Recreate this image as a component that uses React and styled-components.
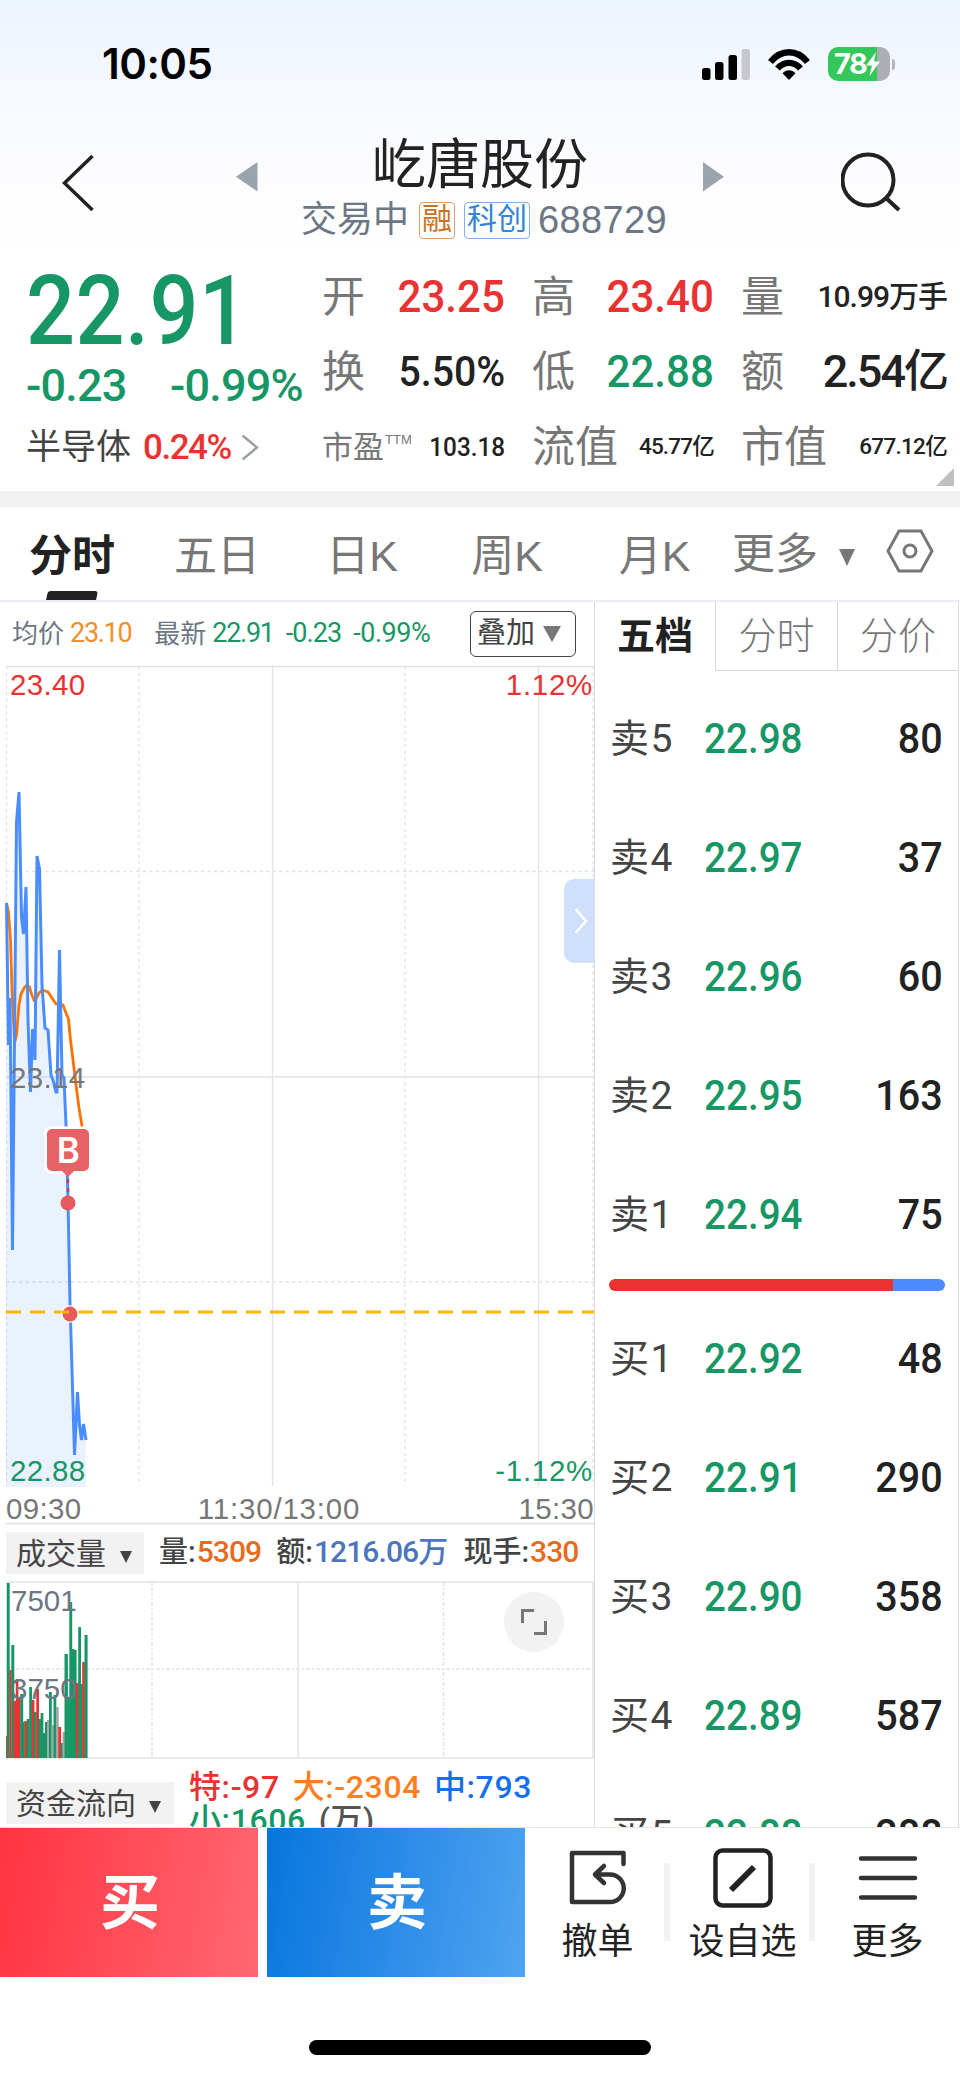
import styled, { createGlobalStyle, css } from 'styled-components'

const GREEN = '#189766'
const RED = '#e93232'

const GlobalStyle = createGlobalStyle`
* { box-sizing: border-box; }
body {
  margin: 0;
  background: #fff;
  color: #222;
  font-family: "Liberation Sans", "Noto Sans CJK SC", sans-serif;
}
svg { display: block; flex: none; }
`

const din = css`
font-family: Roboto, "Noto Sans CJK SC", sans-serif;
`

const Screen = styled.div`
width: 960px;
height: 2079px;
overflow: hidden;
display: flex;
flex-direction: column;
`

/* header */
const Header = styled.header`
height: 260px;
flex: none;
background: linear-gradient(#ecf4ff, #f3f7ff 25%, #fdfdff 70%, #fff);
`
const StatusBar = styled.div`
height: 128px;
padding: 0 65px 0 102px;
display: flex;
align-items: center;
justify-content: space-between;
`
const Clock = styled.span`
font: 600 42px/50px Inter, sans-serif;
letter-spacing: -0.5px;
color: #000;
`
const StatusIcons = styled.div`
display: flex;
align-items: center;
gap: 18px;
`
const Battery = styled.div`
display: flex;
align-items: center;
gap: 2px;
`
const BatteryBody = styled.div`
width: 62px;
height: 34px;
border-radius: 10px;
background: linear-gradient(90deg, #34c759 79%, #adaeb5 79%);
display: flex;
align-items: center;
padding-left: 6px;
font: 700 29px/34px Inter, sans-serif;
letter-spacing: -1.5px;
color: #fff;
`
const BatteryTip = styled.div`
width: 3px;
height: 11px;
border-radius: 0 3px 3px 0;
background: #b4b5bb;
`
const NavBar = styled.div`
display: grid;
grid-template-columns: 62px 174px 488px 117px 1fr;
height: 120px;
`
const NavSlot = styled.div`
grid-column: ${p => p.$col};
padding-top: ${p => p.$top}px;
`
const TitleBlock = styled.div`
display: grid;
grid-template-columns: 22px 1fr 22px;
grid-column: 3;
`
const Title = styled.h1`
margin: 3px 0 0;
font-size: 54px;
font-weight: 400;
line-height: 68px;
text-align: center;
white-space: nowrap;
`
const SubTitle = styled.div`
margin-top: 2px;
margin-left: 8px;
display: flex;
align-items: center;
justify-content: center;
font-size: 36px;
line-height: 38px;
white-space: nowrap;
color: #6b7784;
`
const Tag = styled.span`
height: 37px;
padding: 0 2px;
margin-left: ${p => p.$gap}px;
border: 1.5px solid ${p => p.$border};
border-radius: 4px;
font-size: 30px;
line-height: 32px;
color: ${p => p.$color};
`
const Code = styled.span`
margin-left: 8px;
font-size: 38px;
letter-spacing: 0.4px;
`

/* quote */
const Quote = styled.section`
display: flex;
height: 231px;
flex: none;
`
const QuoteMain = styled.div`
width: 322px;
padding-left: 26px;
color: ${GREEN};
${din}
`
const BigPrice = styled.div`
padding-top: 3px;
height: 96px;
font-size: 97px;
line-height: 97px;
font-weight: 500;
letter-spacing: 0.5px;
transform: scaleX(0.89);
transform-origin: left;
`
const Changes = styled.div`
display: flex;
height: 59px;
font-size: 45px;
line-height: 59px;
font-weight: 500;
letter-spacing: -0.8px;
`
const ChangeValue = styled.span`
width: ${p => p.$w || 'auto'};
white-space: nowrap;
`
const Sector = styled.div`
display: flex;
align-items: center;
height: 65px;
font-size: 35px;
line-height: 1;
color: #444;
white-space: nowrap;
`
const SectorRate = styled.span`
margin: 0 10px 0 12px;
color: ${RED};
font-weight: 500;
letter-spacing: -1.5px;
`
const Stats = styled.div`
flex: 1;
display: grid;
grid-template-columns: 183px 182px 206px;
grid-auto-rows: 75px;
column-gap: 27px;
position: relative;
`
const Stat = styled.div`
display: flex;
align-items: center;
justify-content: space-between;
line-height: 1;
white-space: nowrap;
`
const StatLabel = styled.span`
font-size: ${p => (p.$small ? 31 : 43)}px;
color: #777;
sup {
  font-size: 13px;
  line-height: 1;
  vertical-align: 14px;
  margin-left: 1px;
}
`
const StatValue = styled.span`
${din}
font-size: ${p => p.$size}px;
font-weight: 500;
letter-spacing: ${p => p.$ls || 0}px;
padding-bottom: 2px;
color: ${p => p.$color || '#222'};
transform: scaleX(${p => (p.$ls ? 1 : 0.935)});
transform-origin: right;
`
const Corner = styled.div`
position: absolute;
right: 6px;
top: 208px;
border-left: 18px solid transparent;
border-bottom: 18px solid #bfbfbf;
`
const Divider = styled.div`
height: 16px;
flex: none;
background: #f2f2f2;
`

/* period tabs */
const Periods = styled.nav`
display: grid;
grid-template-columns: 145px 145px 145px 145px 150px 1fr;
height: 95px;
flex: none;
border-bottom: 2px solid #ebecf5;
`
const Period = styled.div`
display: flex;
flex-direction: column;
align-items: center;
font-size: 43px;
line-height: 98px;
height: 93px;
margin-left: -1px;
color: ${p => (p.$active ? '#222' : '#777')};
font-weight: ${p => (p.$active ? 600 : 400)};
`
const ActiveMark = styled.i`
width: 50px;
height: 9px;
margin-top: -14px;
border-radius: 3px 3px 0 0;
background: #222;
transform: skewX(-12deg);
`
const MorePeriods = styled.div`
display: flex;
align-items: center;
padding-left: 2px;
font-size: 43px;
line-height: 98px;
height: 93px;
color: #777;
`
const Caret = styled.i`
margin: ${p => p.$m};
border: ${p => p.$w}px solid transparent;
border-bottom: 0;
border-top: ${p => p.$h}px solid ${p => p.$color};
`
const HexSlot = styled.div`
margin: -5px 0 0 31px;
`

/* body */
const Body = styled.main`
display: flex;
height: 1226px;
flex: none;
overflow: hidden;
border-bottom: 1px solid #e6e6e6;
`
const Left = styled.div`
width: 595px;
flex: none;
border-right: 1px solid #dcdcdf;
`
const InfoRow = styled.div`
display: flex;
align-items: center;
height: 63px;
padding: 0 18px 0 12px;
font-size: 26px;
color: #6b7784;
white-space: nowrap;
`
const InfoNum = styled.span`
${din}
font-size: 27px;
line-height: 1;
letter-spacing: ${p => p.$ls || -1.3}px;
color: ${p => p.$color};
margin-left: ${p => p.$gap}px;
`
const InfoLabel = styled.span`
line-height: 1;
margin-left: ${p => p.$gap || 0}px;
`
const OverlayButton = styled.button`
display: flex;
align-items: center;
width: 106px;
height: 46px;
margin-left: auto;
padding: 0 0 0 6px;
border: 1.5px solid #444;
border-radius: 6px;
background: #fff;
font: 29px/1 "Liberation Sans", "Noto Sans CJK SC", sans-serif;
color: #444;
`
const ChartWrap = styled.div`
position: relative;
height: 860px;
`
const SideHandle = styled.div`
position: absolute;
right: 0;
top: 214px;
width: 30px;
height: 84px;
padding-left: 3px;
border-radius: 10px 0 0 10px;
background: #cfe0fd;
display: flex;
align-items: center;
justify-content: center;
`
const VolumeHead = styled.div`
display: flex;
align-items: center;
height: 56px;
padding-left: 6px;
font-size: 29px;
line-height: 1;
font-weight: 500;
color: #444;
white-space: nowrap;
${din}
`
const Picker = styled.div`
width: ${p => p.$w}px;
height: 42px;
flex: none;
display: flex;
align-items: center;
padding: 2px 0 0 10px;
background: #f2f2f2;
font-size: 30px;
line-height: 1;
font-weight: 400;
color: #444;
`
const HeadItem = styled.span`
margin-left: ${p => p.$gap}px;
padding-bottom: 2px;
b {
  margin-left: 1px;
  font-size: 30px;
  font-weight: 500;
  letter-spacing: -0.9px;
  color: ${p => p.$color};
}
`
const VolumeWrap = styled.div`
position: relative;
height: 178px;
`
const Expand = styled.div`
position: absolute;
right: 30px;
top: 11px;
width: 60px;
height: 60px;
border-radius: 50%;
background: #f2f2f2;
display: flex;
align-items: center;
justify-content: center;
`
const FundHead = styled.div`
display: flex;
height: 70px;
padding: 12px 0 0 6px;
`
const FundPicker = styled(Picker)`
margin-top: 11px;
`
const FundList = styled.div`
${din}
display: flex;
flex-wrap: wrap;
align-content: flex-start;
column-gap: 13px;
padding-left: 15px;
font-size: 32px;
line-height: 33px;
font-weight: 500;
letter-spacing: 0.6px;
white-space: nowrap;
`
const Fund = styled.span`
color: ${p => p.$color};
`

/* order book */
const Book = styled.aside`
width: 364px;
flex: none;
border-right: 1px solid #dcdcdf;
`
const BookTabs = styled.div`
display: grid;
grid-template-columns: 120px 122px 121px;
height: 67px;
`
const BookTab = styled.div`
font-size: 38px;
line-height: 68px;
text-align: center;
color: ${p => (p.$active ? '#222' : '#777')};
font-weight: ${p => (p.$active ? 700 : 300)};
border-left: ${p => (p.$active ? 0 : '1.5px solid #d8d8da')};
border-bottom: ${p => (p.$active ? 0 : '1.5px solid #d8d8da')};
`
const Orders = styled.div`
display: grid;
grid-auto-rows: 60px;
row-gap: 59px;
padding: ${p => p.$top}px 15px 0 15px;
`
const Order = styled.div`
display: grid;
grid-template-columns: 94px 1fr auto;
align-items: center;
font-size: 42px;
line-height: 1;
font-weight: 500;
${din}
`
const Side = styled.span`
font-size: 39px;
font-weight: 400;
letter-spacing: 1.4px;
color: #444;
`
const Price = styled.span`
color: ${GREEN};
transform: scaleX(0.92);
transform-origin: left;
`
const Amount = styled.span`
color: #222;
transform: scaleX(0.94);
transform-origin: right;
`
const Ratio = styled.div`
margin: 34px 13px 0 14px;
height: 12px;
border-radius: 6px;
background: linear-gradient(90deg, ${RED} 84.5%, #4d8cff 84.5%);
`

/* bottom */
const ActionBar = styled.footer`
display: flex;
height: 149px;
flex: none;
`
const TradeButton = styled.button`
width: 258px;
margin-right: ${p => p.$gap || 0}px;
padding: 0 0 9px 2px;
border: 0;
color: #fff;
font: 700 60px/1 "Noto Sans CJK SC", sans-serif;
background: linear-gradient(100deg, ${p => p.$from}, ${p => p.$to});
`
const Action = styled.div`
width: 145px;
display: flex;
flex-direction: column;
align-items: center;
font-size: 36px;
line-height: 50px;
`
const ActionIcon = styled.div`
height: 89px;
padding-top: 10px;
display: flex;
align-items: center;
`
const Separator = styled.i`
width: 6px;
height: 78px;
margin: 35px 0 0 -6px;
background: #f2f2f2;
`
const HomeIndicator = styled.div`
width: 342px;
height: 15px;
margin: 63px auto 0;
border-radius: 8px;
background: #000;
`

// values that carry a unit are tightened by letter spacing, plain ones are condensed
const stats = [
  { label: '开', value: '23.25', size: 45, color: RED },
  { label: '高', value: '23.40', size: 45, color: RED },
  { label: '量', value: '10.99万手', size: 30, ls: -1 },
  { label: '换', value: '5.50%', size: 42 },
  { label: '低', value: '22.88', size: 45, color: GREEN },
  { label: '额', value: '2.54亿', size: 45, ls: -2 },
  { label: '市盈', sup: 'TTM', value: '103.18', size: 26 },
  { label: '流值', value: '45.77亿', size: 22.5, ls: -0.8 },
  { label: '市值', value: '677.12亿', size: 22.5, ls: -0.7 },
]

const sells = [
  ['卖5', '22.98', 80],
  ['卖4', '22.97', 37],
  ['卖3', '22.96', 60],
  ['卖2', '22.95', 163],
  ['卖1', '22.94', 75],
]
const buys = [
  ['买1', '22.92', 48],
  ['买2', '22.91', 290],
  ['买3', '22.90', 358],
  ['买4', '22.89', 587],
  ['买5', '22.88', 288],
]

const pricePoints = '6.5,238 8.5,380 10,333 12.5,585 16.5,157 19,127 21.5,252 23.5,269 26,222 28,355 30.5,427 32.5,364 35,395 37,191 39.5,204 42,320 45,363 48,365 51,410 53,415 56,427 57,427 59.5,285 62,410 64,413 66,460 68,535 70,638 72,705 74.5,790 77.5,727 79.5,760 81.5,775 83.5,759 86,775'
const avgPoints = '6.5,238 8.5,247 10.5,275 12,325 14.5,378 16.5,370 19,340 21,329 24,323 27,320 29.5,322 31.5,329 34,335 36,334 39,328 42,325 48,327 52,333 56,339 63,340 66,348 68.5,354 70.5,375 73,395 76,420 79,443 82,461 86,482'

// [x, width, top, colour]
const bars = [
  [6, 1, 155, 'r'], [6.7, 2.6, 2, 'g'], [9.3, 2, 89, 'r'], [11.3, 2.6, 64, 'g'],
  [13.5, 2.4, 120, 'r'], [15.8, 2.2, 98, 'r'], [18, 2.2, 116, 'r'], [20.2, 2.6, 113, 'g'],
  [22.8, 1.6, 141, 'g'], [24.4, 2.4, 140, 'r'], [26.8, 2.4, 138, 'g'], [29.2, 2.4, 106, 'g'],
  [31.6, 2.4, 119, 'r'], [34, 2.3, 131, 'g'], [36.3, 2.3, 108, 'r'], [38.6, 2, 138, 'g'],
  [40.6, 2.4, 132, 'g'], [43, 2, 152, 'g'], [45, 2, 141, 'g'], [47, 2, 139, 'x'],
  [49, 2.4, 111, 'g'], [51.4, 2.1, 144, 'x'], [53.5, 2.4, 114, 'g'], [55.9, 2.4, 126, 'x'],
  [58.3, 2.4, 146, 'r'], [60.7, 1.8, 162, 'g'], [62.5, 2, 151, 'x'], [64.5, 3, 73, 'g'],
  [67.5, 2, 116, 'g'], [69.3, 2.5, 21, 'g'], [71.6, 2.4, 68, 'g'], [74, 2.2, 69, 'g'],
  [76, 2.4, 102, 'r'], [78.2, 2.4, 46, 'g'], [80.4, 2, 103, 'g'], [82.2, 2.3, 81, 'r'],
  [84.5, 2.7, 54, 'g'],
]
const barColors = { r: RED, g: GREEN, x: '#a6a6a6' }

function PriceChart() {
  return (
    <svg width="594" height="860" fontFamily="Liberation Sans, sans-serif" fontSize="29.5" letterSpacing=".35">
      <g stroke="#e1e1f0" strokeWidth="1.3">
        <path d="M6 1.500H594M272.500 1V821M538.500 1V821M6 412H594" />
        <path d="M6 206.500H594M6 617H594M6.500 1V821M139 1V821M405 1V821M593 1V821" strokeDasharray="3.500 3" />
      </g>
      <path d="M6 858.500H594" stroke="#dfdfec" strokeWidth="1.5" />
      <polygon points={`6,822 ${pricePoints} 86,822`} fill="#4d8cff" fillOpacity=".11" />
      <polyline points={avgPoints} fill="none" stroke="#ff7300" strokeWidth="2.8" />
      <polyline points={pricePoints} fill="none" stroke="#4a8dff" strokeWidth="3" />
      <path d="M6 647H594" stroke="#ffb400" strokeWidth="3" strokeDasharray="15 9" />
      <circle cx="70" cy="649" r="9" fill="#fff" fillOpacity=".8" />
      <circle cx="70" cy="649" r="7.500" fill="#e6595c" />
      <path d="M62 647H69" stroke="#ffb400" strokeWidth="3" />
      <circle cx="68" cy="538" r="7.500" fill="#e6595c" />
      <path d="M68 514V532" stroke="#c43c5c" strokeWidth="2.5" strokeDasharray="4 5" />
      <rect x="44" y="461.500" width="46" height="47" rx="7" fill="#fff" />
      <path d="M52 464H84a5 5 0 0 1 5 5V501a5 5 0 0 1-5 5H74L68 512L62 506H52a5 5 0 0 1-5-5V469a5 5 0 0 1 5-5Z" fill="#e76264" />
      <text x="68.500" y="497.500" textAnchor="middle" fill="#fff" fontFamily="Inter, sans-serif" fontSize="35" fontWeight="600">B</text>
      <text x="10" y="30" fill={RED}>23.40</text>
      <text x="593" y="30" fill={RED} textAnchor="end" letterSpacing=".7">1.12%</text>
      <text x="10" y="423" fill="#777">23.14</text>
      <text x="10" y="816" fill={GREEN}>22.88</text>
      <text x="593" y="816" fill={GREEN} textAnchor="end" letterSpacing=".7">-1.12%</text>
      <g fill="#777">
        <text x="6" y="854">09:30</text>
        <text x="279" y="854" textAnchor="middle" letterSpacing=".8">11:30/13:00</text>
        <text x="594" y="854" textAnchor="end">15:30</text>
      </g>
    </svg>
  )
}

function VolumeChart() {
  return (
    <svg width="594" height="178" fontFamily="Liberation Sans, sans-serif" fontSize="29.5">
      <g stroke="#e4e4e6" strokeWidth="1.500" fill="none">
        <path d="M6 1H594M6 177H594M298 1V177M593 1V177" />
        <path d="M6 88H594M152 1V177M443.500 1V177" strokeDasharray="4 2 2 2" />
      </g>
      {bars.map(([x, w, top, c], i) => (
        <rect key={i} x={x} y={top} width={w + 0.4} height={177 - top} fill={barColors[c]} />
      ))}
      <g fill="#6b7784">
        <text x="11" y="30">7501</text>
        <text x="11" y="118">3750</text>
      </g>
    </svg>
  )
}

function SignalIcon() {
  return (
    <svg width="48" height="31">
      <rect x="0" y="19" width="8.500" height="12" rx="2.500" />
      <rect x="13" y="13" width="8.500" height="18" rx="2.500" />
      <rect x="26.500" y="6" width="8.500" height="25" rx="2.500" />
      <rect x="39.500" y="0" width="8.500" height="31" rx="2.500" fill="#c5c8ce" />
    </svg>
  )
}

function WifiIcon() {
  return (
    <svg width="42" height="31" viewBox="0 0 42 31" fill="none" stroke="#000" strokeWidth="6.300">
      <path d="M2.500 12.500C13-.5 29-.5 39.500 12.500" transform="translate(0 .5)" />
      <path d="M9.500 19.500C16 12 26 12 32.500 19.500" />
      <path d="M21 31L14.500 24.300C18 20.300 24 20.300 27.500 24.300Z" fill="#000" stroke="none" />
    </svg>
  )
}

function OrderRow({ row: [side, price, amount] }) {
  return (
    <Order>
      <Side>{side}</Side>
      <Price>{price}</Price>
      <Amount>{amount}</Amount>
    </Order>
  )
}

export default function App() {
  return (
    <Screen>
      <GlobalStyle />
      <Header>
        <StatusBar>
          <Clock>10:05</Clock>
          <StatusIcons>
            <SignalIcon />
            <WifiIcon />
            <Battery>
              <BatteryBody>
                78
                <svg width="14" height="24" viewBox="0 0 14 24"><path d="M10 0L0 13.500H6L3.500 24L14 9.500H8Z" fill="#fff" /></svg>
              </BatteryBody>
              <BatteryTip />
            </Battery>
          </StatusIcons>
        </StatusBar>

        <NavBar>
          <NavSlot $col={2} $top={26}>
            <svg width="34" height="58" fill="none" stroke="#222" strokeWidth="3.500"><path d="M30.500 2L2.500 29L30.500 56" /></svg>
          </NavSlot>
          <TitleBlock>
            <NavSlot $col={1} $top={34}>
              <svg width="22" height="30"><path d="M21.500 0V29.500L0 14.700Z" fill="#9ba4ad" /></svg>
            </NavSlot>
            <div>
              <Title>屹唐股份</Title>
              <SubTitle>
                交易中
                <Tag $gap={10} $color="#c8721c" $border="#dda066">融</Tag>
                <Tag $gap={9} $color="#3585d5" $border="#7db2e6">科创</Tag>
                <Code>688729</Code>
              </SubTitle>
            </div>
            <NavSlot $col={3} $top={34}>
              <svg width="22" height="30"><path d="M1 0V29.500L22 14.700Z" fill="#9ba4ad" /></svg>
            </NavSlot>
          </TitleBlock>
          <NavSlot $col={5} $top={24}>
            <svg width="62" height="62" fill="none" stroke="#222" strokeWidth="4"><circle cx="27" cy="28" r="25.500" /><path d="M44.500 45.500L58 58" /></svg>
          </NavSlot>
        </NavBar>
      </Header>

      <Quote>
        <QuoteMain>
          <BigPrice>22.91</BigPrice>
          <Changes>
            <ChangeValue $w="144px">-0.23</ChangeValue>
            <ChangeValue>-0.99%</ChangeValue>
          </Changes>
          <Sector>
            半导体
            <SectorRate>0.24%</SectorRate>
            <svg width="18" height="27" fill="none" stroke="#98a1ab" strokeWidth="2.500"><path d="M1.500 1.500L16 13.500L1.500 25.500" /></svg>
          </Sector>
        </QuoteMain>
        <Stats>
          {stats.map(s => (
            <Stat key={s.label}>
              <StatLabel $small={!!s.sup}>{s.label}{s.sup && <sup>{s.sup}</sup>}</StatLabel>
              <StatValue $size={s.size} $ls={s.ls} $color={s.color}>{s.value}</StatValue>
            </Stat>
          ))}
          <Corner />
        </Stats>
      </Quote>
      <Divider />

      <Periods>
        <Period $active>分时<ActiveMark /></Period>
        <Period>五日</Period>
        <Period>日K</Period>
        <Period>周K</Period>
        <Period>月K</Period>
        <MorePeriods>
          更多
          <Caret $w={8.5} $h={17} $color="#777" $m="8px 0 0 21px" />
          <HexSlot>
            <svg width="48" height="44" fill="none" stroke="#777" strokeWidth="3"><path d="M13 2H35L46 22L35 42H13L2 22Z" /><circle cx="24" cy="22" r="6" /></svg>
          </HexSlot>
        </MorePeriods>
      </Periods>

      <Body>
        <Left>
          <InfoRow>
            <InfoLabel>均价</InfoLabel>
            <InfoNum $gap={6} $color="#ee8e2d">23.10</InfoNum>
            <InfoLabel $gap={23}>最新</InfoLabel>
            <InfoNum $gap={6} $color={GREEN}>22.91</InfoNum>
            <InfoNum $gap={12} $color={GREEN} $ls={-0.9}>-0.23</InfoNum>
            <InfoNum $gap={12} $color={GREEN} $ls={-0.5}>-0.99%</InfoNum>
            <OverlayButton>叠加<Caret $w={9.5} $h={16} $color="#777" $m="0 0 0 8px" /></OverlayButton>
          </InfoRow>
          <ChartWrap>
            <PriceChart />
            <SideHandle>
              <svg width="14" height="26" fill="none" stroke="#fff" strokeWidth="2.500"><path d="M1.500 1L12 13L1.500 25" /></svg>
            </SideHandle>
          </ChartWrap>
          <VolumeHead>
            <Picker $w={138}>成交量<Caret $w={6} $h={12} $color="#444" $m="6px 0 0 14px" /></Picker>
            <HeadItem $gap={15} $color="#e66c1b">量:<b>5309</b></HeadItem>
            <HeadItem $gap={15} $color="#4d75bf">额:<b>1216.06万</b></HeadItem>
            <HeadItem $gap={16} $color="#e66c1b">现手:<b>330</b></HeadItem>
          </VolumeHead>
          <VolumeWrap>
            <VolumeChart />
            <Expand>
              <svg width="28" height="28" fill="none" stroke="#777" strokeWidth="3"><path d="M2.500 15V2.500H14M25.500 13V25.500H14" /></svg>
            </Expand>
          </VolumeWrap>
          <FundHead>
            <FundPicker $w={168}>资金流向<Caret $w={6} $h={12} $color="#444" $m="6px 0 0 13px" /></FundPicker>
            <FundList>
              <Fund $color={RED}>特:-97</Fund>
              <Fund $color="#ff7f1f">大:-2304</Fund>
              <Fund $color="#1670ee">中:793</Fund>
              <Fund $color={GREEN}>小:1606</Fund>
              <Fund $color="#555">(万)</Fund>
            </FundList>
          </FundHead>
        </Left>

        <Book>
          <BookTabs>
            <BookTab $active>五档</BookTab>
            <BookTab>分时</BookTab>
            <BookTab>分价</BookTab>
          </BookTabs>
          <Orders $top={40}>
            {sells.map(r => <OrderRow key={r[0]} row={r} />)}
          </Orders>
          <Ratio />
          <Orders $top={38}>
            {buys.map(r => <OrderRow key={r[0]} row={r} />)}
          </Orders>
        </Book>
      </Body>

      <ActionBar>
        <TradeButton $gap={9} $from="#ff3340" $to="#ff6872">买</TradeButton>
        <TradeButton $from="#0775dd" $to="#50a3f1">卖</TradeButton>
        <Action>
          <ActionIcon>
            <svg width="58" height="56" fill="none" stroke="#333" strokeWidth="4.500" strokeLinecap="round" strokeLinejoin="round">
              <path d="M54.500 14V3H3V52H41A13.700 13.700 0 0 0 41 24.500H26M35 16L26 24.500L35 33" />
            </svg>
          </ActionIcon>
          撤单
        </Action>
        <Separator />
        <Action>
          <ActionIcon>
            <svg width="60" height="60" fill="none" stroke="#222" strokeWidth="4.500">
              <rect x="2.500" y="2.500" width="55" height="55" rx="7" />
              <path d="M18 42L41 19" strokeWidth="6" />
            </svg>
          </ActionIcon>
          设自选
        </Action>
        <Separator />
        <Action>
          <ActionIcon>
            <svg width="60" height="60" stroke="#333" strokeWidth="4.500" strokeLinecap="round"><path d="M3 10.500H57M3 30H57M3 49.500H57" /></svg>
          </ActionIcon>
          更多
        </Action>
      </ActionBar>
      <HomeIndicator />
    </Screen>
  )
}
